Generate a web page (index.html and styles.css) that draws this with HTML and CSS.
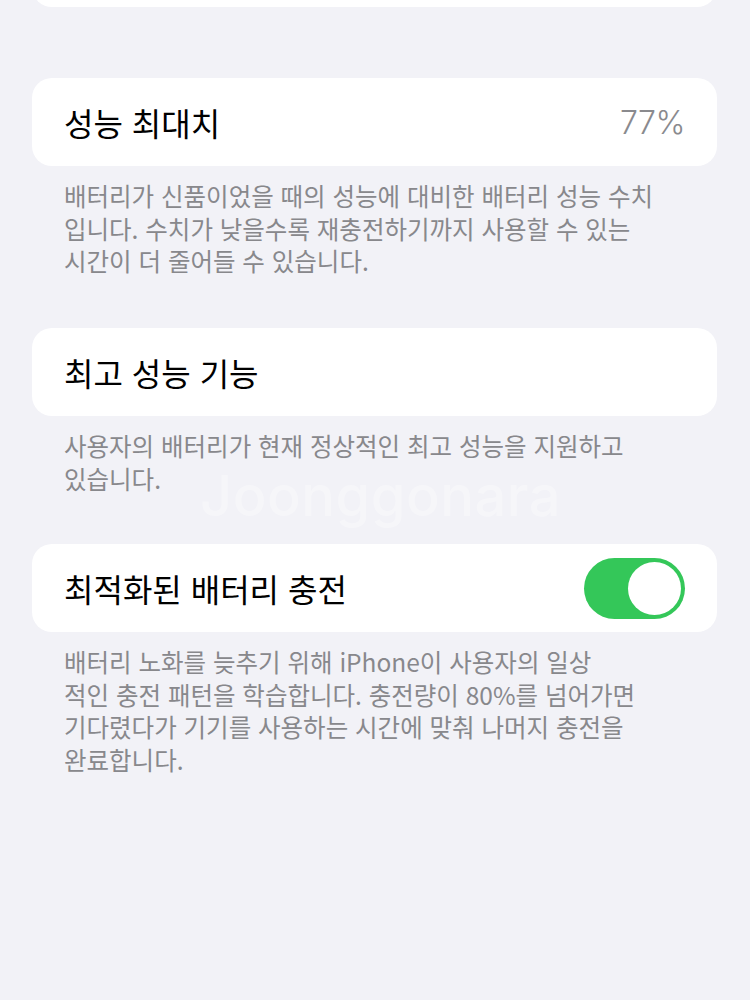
FILE: index.html
```html
<!DOCTYPE html>
<html lang="ko">
<head>
<meta charset="utf-8">
<link rel="stylesheet" href="styles.css">
</head>
<body>
<div class="page">
  <div class="card card-top"></div>

  <div class="card row">
    <span class="label">성능 최대치</span>
    <span class="value">77%</span>
  </div>
  <p class="note note-1">배터리가 신품이었을 때의 성능에 대비한 배터리 성능 수치<br>입니다. 수치가 낮을수록 재충전하기까지 사용할 수 있는<br>시간이 더 줄어들 수 있습니다.</p>

  <div class="card row">
    <span class="label">최고 성능 기능</span>
  </div>
  <p class="note note-2">사용자의 배터리가 현재 정상적인 최고 성능을 지원하고<br>있습니다.</p>

  <div class="card row">
    <span class="label">최적화된 배터리 충전</span>
    <span class="toggle"><span class="knob"></span></span>
  </div>
  <p class="note">배터리 노화를 늦추기 위해 iPhone이 사용자의 일상<br>적인 충전 패턴을 학습합니다. 충전량이 80%를 넘어가면<br>기다렸다가 기기를 사용하는 시간에 맞춰 나머지 충전을<br>완료합니다.</p>

  <div class="watermark">Joonggonara</div>
</div>
</body>
</html>
```

FILE: styles.css
```css
html, body {
  margin: 0;
  padding: 0;
  background: #f2f2f7;
}
body {
  font-family: "Noto Sans CJK KR", "Noto Sans", sans-serif;
  -webkit-font-smoothing: antialiased;
}
.page {
  position: relative;
  width: 750px;
  height: 1000px;
  overflow: hidden;
  padding: 0 33px 0 32px;
  box-sizing: border-box;
}
.card {
  background: #ffffff;
  border-radius: 20px;
}
.card-top {
  height: 47px;
  margin-top: -40px;
  margin-bottom: 71px;
}
.row {
  display: flex;
  align-items: center;
  justify-content: space-between;
  height: 88px;
  padding: 0 32px;
  box-sizing: border-box;
}
.label {
  font-size: 32px;
  color: #000;
  line-height: 1;
}
.value {
  font-family: "Inter", "Noto Sans", sans-serif;
  font-size: 32px;
  color: #8a8a8e;
  font-weight: 300;
  letter-spacing: -0.5px;
}
.note {
  margin: 14px 0 0 0;
  padding: 0 32px;
  font-size: 24.5px;
  line-height: 32.5px;
  color: #88888c;
  white-space: nowrap;
}
.note-1 { margin-bottom: 50.5px; }
.note-2 { margin-bottom: 49px; }
.toggle {
  width: 101px;
  height: 61px;
  border-radius: 31px;
  background: #34c759;
  display: flex;
  align-items: center;
  justify-content: flex-end;
  padding: 0 4px;
  box-sizing: border-box;
}
.knob {
  width: 53px;
  height: 53px;
  border-radius: 50%;
  background: #fff;
}
.watermark {
  position: absolute;
  left: 200px;
  top: 462px;
  font-family: "Inter", "Noto Sans", sans-serif;
  font-weight: 500;
  font-size: 56px;
  color: rgba(255, 255, 255, 0.32);
  letter-spacing: 0.5px;
}
```
